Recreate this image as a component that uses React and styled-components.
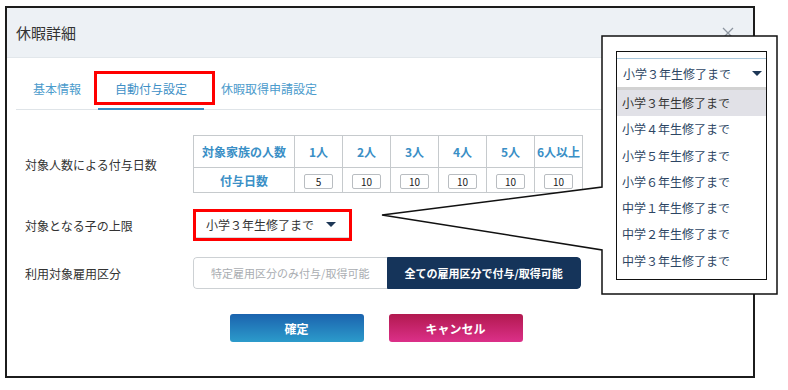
import React from 'react';
import styled, { createGlobalStyle } from 'styled-components';

const GlobalStyle = createGlobalStyle`
  body {
    margin: 0;
    background: #fff;
    font-family: "Noto Sans CJK JP", "Noto Sans", sans-serif;
    color: #333;
  }
`;

const Page = styled.div`
  position: relative;
  width: 788px;
  height: 390px;
  overflow: hidden;
`;

const Frame = styled.section`
  box-sizing: border-box;
  margin: 6px 0 0 5px;
  width: 750px;
  height: 372px;
  border: 2px solid #1c1c1c;
  display: flex;
  flex-direction: column;
`;

const Header = styled.header`
  height: 49px;
  flex: 0 0 auto;
  background: #edf1f5;
  border-bottom: 1px solid #e2e7eb;
  display: flex;
  align-items: center;
  justify-content: space-between;
  padding: 0 19px 0 9px;
  .title {
    font-size: 15px;
    color: #333;
  }
`;

const TabBar = styled.nav`
  display: flex;
  margin: 14px 9px 0;
  border-bottom: 1px solid #dfe4e8;
`;

const Tab = styled.div`
  position: relative;
  padding: 8px 17px 11px;
  line-height: 17px;
  font-size: 12px;
  color: ${p => (p.$active ? '#3d8fc6' : '#4b9bcc')};
  border-bottom: 2px solid ${p => (p.$active ? '#3a8dc4' : 'transparent')};
  margin-bottom: -1px;
  &::after {
    content: '';
    display: ${p => (p.$marked ? 'block' : 'none')};
    position: absolute;
    top: -1px;
    left: -4px;
    right: -11px;
    bottom: 3px;
    border: 3px solid #f00;
  }
`;

const Form = styled.div`
  display: grid;
  grid-template-columns: 168px auto;
  row-gap: 16px;
  align-items: center;
  padding: 25px 0 0 18px;
  .label {
    font-size: 12px;
    color: #333;
  }
`;

const CountTable = styled.table`
  border-collapse: collapse;
  table-layout: fixed;
  width: 390px;
  th, td {
    border: 1.5px solid #c6cacd;
    text-align: center;
    padding: 0;
    font-size: 12px;
    font-weight: bold;
    color: #3a8fc6;
    white-space: nowrap;
  }
  th { height: 31px; }
  td { height: 24px; }
  col { width: 48px; }
  col.head { width: 101px; }
`;

const DayInput = styled.span`
  display: inline-block;
  box-sizing: border-box;
  width: 29px;
  height: 15px;
  line-height: 13px;
  border: 1px solid #b9bdc1;
  border-radius: 2px;
  font-size: 10px;
  font-weight: normal;
  color: #222;
  vertical-align: middle;
`;

const Select = styled.div`
  box-sizing: border-box;
  width: 153px;
  height: 26px;
  margin: 3px;
  display: flex;
  align-items: center;
  justify-content: space-between;
  padding: 0 13px 0 10px;
  font-size: 12px;
  color: #333;
  background: #fff;
  border-bottom: 1px solid #d6d9dc;
  box-shadow: 0 1px 2px rgba(0, 0, 0, 0.12);
  outline: ${p => (p.$marked ? '3px solid #f00' : 'none')};
  outline-offset: 0;
`;

const Caret = styled.span`
  width: 0;
  height: 0;
  border-left: 5px solid transparent;
  border-right: 5px solid transparent;
  border-top: 5px solid #1d3756;
`;

const Segmented = styled.div`
  display: flex;
  width: 388px;
  height: 32px;
  border-radius: 4px;
  overflow: hidden;
`;

const Segment = styled.div`
  flex: 1 1 0;
  box-sizing: border-box;
  display: flex;
  align-items: center;
  justify-content: center;
  font-size: 11px;
  font-weight: ${p => (p.$on ? 'bold' : 'normal')};
  color: ${p => (p.$on ? '#fff' : '#a9adb1')};
  background: ${p => (p.$on ? '#15345a' : '#fff')};
  border: 1px solid ${p => (p.$on ? '#15345a' : '#cdd1d4')};
  border-right: ${p => (p.$on ? '1px solid #15345a' : 'none')};
  border-radius: ${p => (p.$on ? '0 4px 4px 0' : '4px 0 0 4px')};
`;

const ButtonRow = styled.div`
  display: flex;
  justify-content: center;
  gap: 25px;
  margin-top: 25px;
  padding-right: 8px;
`;

const Button = styled.button`
  width: 134px;
  height: 28px;
  border: none;
  border-radius: 3px;
  font-family: inherit;
  font-size: 12px;
  font-weight: bold;
  color: #fff;
  background: ${p =>
    p.$kind === 'cancel'
      ? 'linear-gradient(#b2194f, #dc3089)'
      : 'linear-gradient(#1b63ae, #2c9bcb)'};
`;

const Callout = styled.svg`
  position: absolute;
  left: 0;
  top: 0;
  pointer-events: none;
`;

const Dropdown = styled.div`
  position: absolute;
  left: 616px;
  top: 51px;
  box-sizing: border-box;
  width: 151px;
  height: 229px;
  border: 1px solid #111;
  background: #fff;
`;

const DropHead = styled.div`
  margin-top: 6px;
  border-top: 1px solid #a9c7dc;
  height: 28px;
  display: flex;
  align-items: center;
  justify-content: space-between;
  padding: 0 4px 0 6px;
  font-size: 12px;
  color: #2c4563;
  border-bottom: 3px solid #d2d2d2;
`;

const Option = styled.div`
  height: 26.3px;
  line-height: 26.3px;
  padding-left: 5px;
  font-size: 12px;
  color: ${p => (p.$selected ? '#333' : '#2c4563')};
  background: ${p => (p.$selected ? '#e1e1e7' : 'transparent')};
  &:first-child { margin-top: 2px; }
`;

const CloseIcon = () => (
  <svg width="12" height="12" viewBox="0 0 12 12">
    <path d="M1 1 L11 11 M11 1 L1 11" stroke="#8d96a0" strokeWidth="1.3" fill="none" />
  </svg>
);

const counts = [
  { label: '1人', days: 5 },
  { label: '2人', days: 10 },
  { label: '3人', days: 10 },
  { label: '4人', days: 10 },
  { label: '5人', days: 10 },
  { label: '6人以上', days: 10 },
];

const options = [
  '小学３年生修了まで',
  '小学４年生修了まで',
  '小学５年生修了まで',
  '小学６年生修了まで',
  '中学１年生修了まで',
  '中学２年生修了まで',
  '中学３年生修了まで',
];

export default function App() {
  return (
    <Page>
      <GlobalStyle />
      <Frame>
        <Header>
          <span className="title">休暇詳細</span>
          <CloseIcon />
        </Header>
        <TabBar>
          <Tab>基本情報</Tab>
          <Tab $active $marked>自動付与設定</Tab>
          <Tab>休暇取得申請設定</Tab>
        </TabBar>
        <Form>
          <span className="label">対象人数による付与日数</span>
          <CountTable>
            <colgroup>
              <col className="head" />
              {counts.map(c => (
                <col key={c.label} />
              ))}
            </colgroup>
            <tbody>
              <tr>
                <th>対象家族の人数</th>
                {counts.map(c => (
                  <th key={c.label}>{c.label}</th>
                ))}
              </tr>
              <tr>
                <td>付与日数</td>
                {counts.map(c => (
                  <td key={c.label}>
                    <DayInput>{c.days}</DayInput>
                  </td>
                ))}
              </tr>
            </tbody>
          </CountTable>

          <span className="label">対象となる子の上限</span>
          <Select $marked>
            <span>小学３年生修了まで</span>
            <Caret />
          </Select>

          <span className="label">利用対象雇用区分</span>
          <Segmented>
            <Segment>特定雇用区分のみ付与/取得可能</Segment>
            <Segment $on>全ての雇用区分で付与/取得可能</Segment>
          </Segmented>
        </Form>
        <ButtonRow>
          <Button>確定</Button>
          <Button $kind="cancel">キャンセル</Button>
        </ButtonRow>
      </Frame>

      <Callout width="788" height="390">
        <polygon
          points="602,36 777,36 777,294 602,294 602,250 382,215 602,187"
          fill="#fff"
          stroke="#111"
          strokeWidth="1.5"
        />
      </Callout>
      <Dropdown>
        <DropHead>
          <span>小学３年生修了まで</span>
          <Caret />
        </DropHead>
        {options.map((o, i) => (
          <Option key={o} $selected={i === 0}>
            {o}
          </Option>
        ))}
      </Dropdown>
    </Page>
  );
}
